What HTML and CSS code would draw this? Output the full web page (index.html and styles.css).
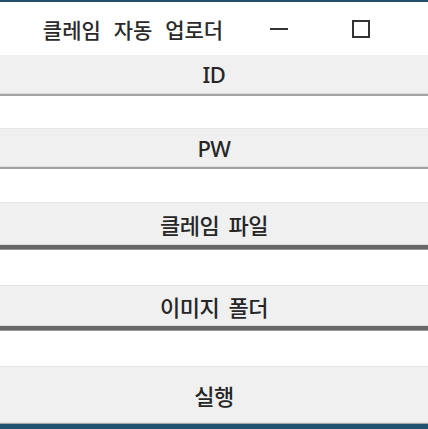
FILE: index.html
```html
<!DOCTYPE html>
<html lang="ko">
<head>
<meta charset="utf-8">
<title>클레임 자동 업로더</title>
<link rel="stylesheet" href="styles.css">
</head>
<body>
<div class="window">
  <div class="edge-top"></div>
  <div class="titlebar">
    <div class="title">클레임 자동 업로더</div>
    <div class="ctl ctl-min"><span class="min-bar"></span></div>
    <div class="ctl ctl-max"><span class="max-box"></span></div>
  </div>
  <button class="btn btn-a">ID</button>
  <input class="field field-light" type="text">
  <button class="btn btn-b">PW</button>
  <input class="field field-light field-b" type="password">
  <button class="btn btn-c">클레임 파일</button>
  <input class="field field-dark" type="text">
  <button class="btn btn-d">이미지 폴더</button>
  <input class="field field-dark" type="text">
  <button class="btn btn-e">실행</button>
  <div class="edge-bottom"></div>
</div>
</body>
</html>
```

FILE: styles.css
```css
* {
  box-sizing: border-box;
}

html, body {
  margin: 0;
  padding: 0;
  background: #ffffff;
}

.window {
  width: 428px;
  height: 429px;
  display: flex;
  flex-direction: column;
  overflow: hidden;
  font-family: "Noto Sans", "Noto Sans CJK KR", sans-serif;
  color: #222222;
}

.edge-top {
  height: 2px;
  background: #244d68;
  flex: none;
}

.titlebar {
  height: 53px;
  flex: none;
  display: flex;
  align-items: center;
  background: #ffffff;
}

.title {
  width: 266px;
  text-align: center;
  font-size: 21px;
  word-spacing: 7px;
  font-family: "Noto Sans CJK KR", sans-serif;
  font-weight: 500;
  color: #2a2a2a;
  padding-top: 1px;
}

.ctl {
  width: 26px;
  height: 26px;
  display: flex;
  align-items: center;
  justify-content: center;
}

.ctl-max {
  margin-left: 56px;
}

.min-bar {
  display: block;
  width: 18px;
  height: 2px;
  background: #333333;
}

.max-box {
  display: block;
  width: 18px;
  height: 18px;
  border: 2px solid #333333;
}

.btn {
  appearance: none;
  margin: 0;
  padding: 0;
  width: 100%;
  flex: none;
  display: flex;
  align-items: center;
  justify-content: center;
  background: #f0f0f0;
  border: none;
  border-top: 1px solid #e6e6e6;
  border-bottom: 1px solid #dcdcdc;
  font-family: "Noto Sans", "Noto Sans CJK KR", sans-serif;
  font-size: 22px;
  font-weight: 500;
  color: #262626;
  letter-spacing: -0.5px;
  word-spacing: 4px;
}

.btn-a {
  height: 39px;
  border-top: none;
}

.btn-b {
  height: 39px;
}

.btn-c {
  height: 43px;
}

.btn-d {
  height: 41px;
}

.btn-e {
  height: 56px;
  border-bottom: none;
}

.field {
  appearance: none;
  margin: 0;
  padding: 0;
  width: 100%;
  flex: none;
  background: #ffffff;
  border: none;
  outline: none;
}

.field-light {
  height: 34px;
  border-top: 2px solid #a3a3a3;
}

.field-b {
  height: 35px;
}

.field-dark {
  height: 40px;
  border-top: 4px solid #686868;
  box-shadow: inset 0 1px 0 #9a9a9a;
}

.edge-bottom {
  height: 7px;
  flex: none;
  border-top: 1px solid #e2e2e2;
  border-bottom: 5px solid #1f526e;
  background: #a8a8a8;
}
```
